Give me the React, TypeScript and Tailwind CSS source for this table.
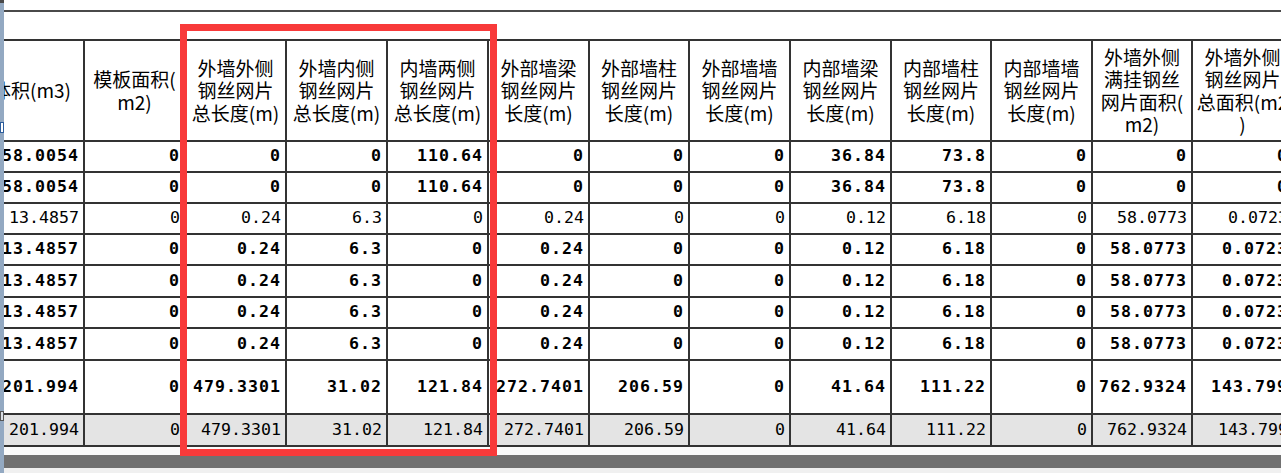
const colW = [
  "w-[105px]",
  "w-[101px]",
  "w-[101px]",
  "w-[101px]",
  "w-[101px]",
  "w-[101px]",
  "w-[100px]",
  "w-[101px]",
  "w-[101px]",
  "w-[100px]",
  "w-[101px]",
  "w-[100px]",
  "w-[101px]",
];

const headers: string[][] = [
  ["体积(m3)"],
  ["模板面积(", "m2)"],
  ["外墙外侧", "钢丝网片", "总长度(m)"],
  ["外墙内侧", "钢丝网片", "总长度(m)"],
  ["内墙两侧", "钢丝网片", "总长度(m)"],
  ["外部墙梁", "钢丝网片", "长度(m)"],
  ["外部墙柱", "钢丝网片", "长度(m)"],
  ["外部墙墙", "钢丝网片", "长度(m)"],
  ["内部墙梁", "钢丝网片", "长度(m)"],
  ["内部墙柱", "钢丝网片", "长度(m)"],
  ["内部墙墙", "钢丝网片", "长度(m)"],
  ["外墙外侧", "满挂钢丝", "网片面积(", "m2)"],
  ["外墙外侧", "钢丝网片", "总面积(m2", ")"],
];

const rowA = ["58.0054", "0", "0", "0", "110.64", "0", "0", "0", "36.84", "73.8", "0", "0", "0"];
const rowB = ["13.4857", "0", "0.24", "6.3", "0", "0.24", "0", "0", "0.12", "6.18", "0", "58.0773", "0.0723"];
const total = ["201.994", "0", "479.3301", "31.02", "121.84", "272.7401", "206.59", "0", "41.64", "111.22", "0", "762.9324", "143.799"];

type Row = { values: string[]; bold: boolean; h: string; bg?: string };

const rows: Row[] = [
  { values: rowA, bold: true, h: "h-[31px]" },
  { values: rowA, bold: true, h: "h-[31px]" },
  { values: rowB, bold: false, h: "h-[31px]" },
  { values: rowB, bold: true, h: "h-[31px]" },
  { values: rowB, bold: true, h: "h-[32px]" },
  { values: rowB, bold: true, h: "h-[31px]" },
  { values: rowB, bold: true, h: "h-[32px]" },
  { values: total, bold: true, h: "h-[54px]" },
  { values: total, bold: false, h: "h-[32px]", bg: "bg-[#e4e4e4]" },
];

function HeaderRow() {
  return (
    <div className="flex h-[101px] border-b-2 border-[#333]">
      {headers.map((lines, i) => (
        <div
          key={i}
          className={`${colW[i]} shrink-0 h-full border-r-2 border-[#333] flex flex-col items-center justify-center overflow-hidden text-[19px] leading-[22.5px] text-black whitespace-nowrap`}
          style={{ fontFamily: '"Noto Sans CJK SC", "Noto Sans", sans-serif' }}
        >
          {lines.map((l, j) => (
            <span key={j}>{l}</span>
          ))}
        </div>
      ))}
    </div>
  );
}

function DataRow({ row }: { row: Row }) {
  return (
    <div className={`flex ${row.h} border-b-2 border-[#333] ${row.bg ?? "bg-white"}`}>
      {row.values.map((v, i) => (
        <div
          key={i}
          className={`${colW[i]} shrink-0 h-full border-r-2 border-[#333] flex items-center justify-end pr-[4px] overflow-hidden whitespace-nowrap text-[16.6px] text-black ${
            row.bold ? "font-bold tracking-[1px]" : "font-normal"
          }`}
          style={{ fontFamily: '"DejaVu Sans Mono", "Liberation Mono", monospace' }}
        >
          {v}
        </div>
      ))}
    </div>
  );
}

export default function App() {
  return (
    <div className="relative w-[1281px] h-[473px] bg-white overflow-hidden flex">
      {/* window edge */}
      <div className="w-[4px] shrink-0 h-full bg-[#93a9c2] flex flex-col">
        <div className="h-[3px] bg-[#4a4a4a]" />
        <div className="h-[119px]" />
        <div className="h-[11px] bg-white border border-[#2c5d9c]" />
        <div className="h-[278px]" />
        <div className="h-[10px] bg-[#d8dde4] border border-[#555]" />
      </div>

      <div className="flex-1 h-full flex flex-col overflow-hidden">
        <div className="h-[10px] shrink-0" />
        <div className="h-[2px] shrink-0 bg-[#4a4a4a]" />
        <div className="h-[27px] shrink-0" />

        <div className="ml-[-24px] border-t-2 border-[#333] shrink-0">
          <HeaderRow />
          {rows.map((r, i) => (
            <DataRow key={i} row={r} />
          ))}
        </div>

        <div className="h-[8px] shrink-0 bg-[#fafafa]" />
        <div className="h-[13px] shrink-0 bg-[#717171]" />
        <div className="flex-1 bg-[#f0f0f0]" />
      </div>

      {/* highlight box drawn over the table */}
      <div className="absolute left-[180px] top-[24px] w-[317px] h-[432px] border-[7px] border-[#f83a3a] pointer-events-none" />
    </div>
  );
}
